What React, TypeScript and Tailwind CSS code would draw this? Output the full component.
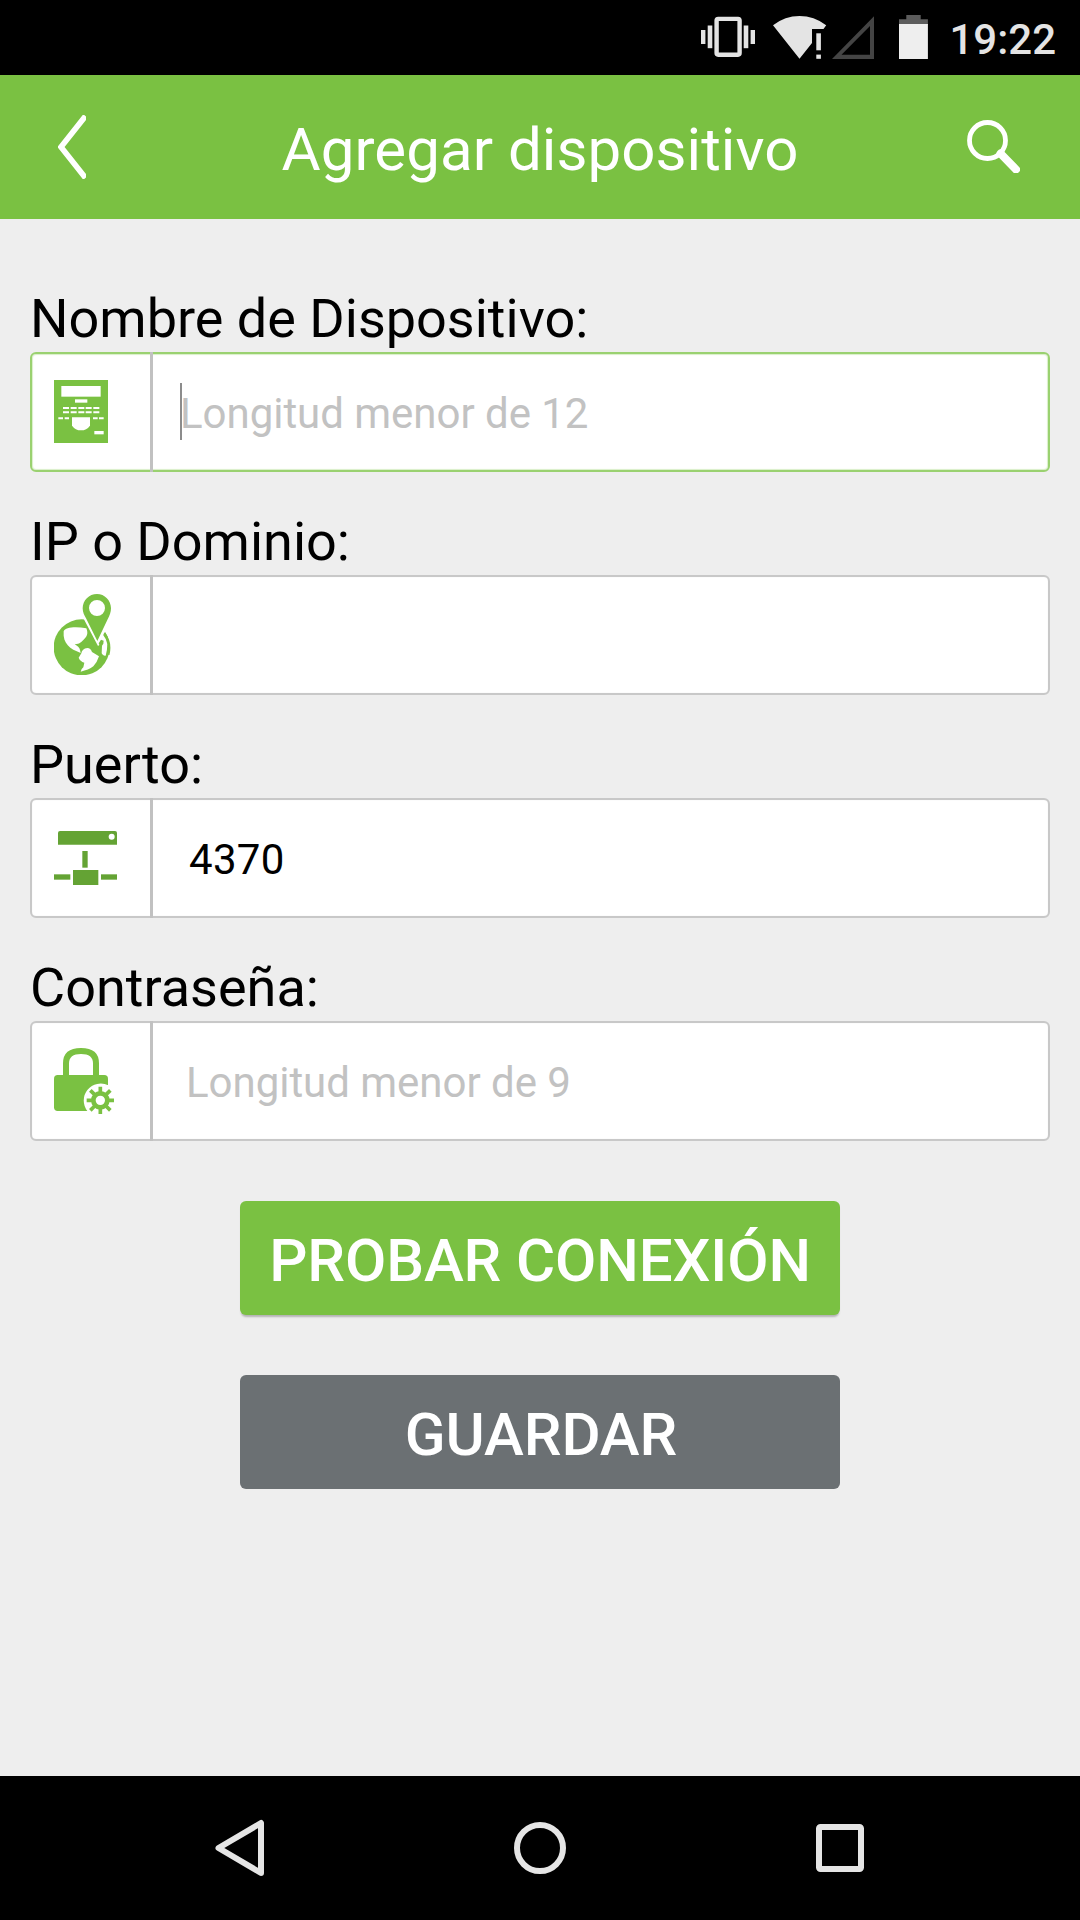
import React from 'react';
import clsx from 'clsx';

const StatusBar: React.FC = () => (
  <div className="flex h-[75px] items-start justify-end bg-black pr-[24px]">
    {/* vibrate */}
    <svg className="mr-[18px]" width="54" height="75" viewBox="701 0 54 75" fill="#e4e4e4">
      <rect x="701" y="30" width="4.4" height="14" />
      <rect x="707.7" y="25.5" width="4.6" height="22.7" />
      <rect x="743.7" y="25.5" width="4.6" height="22.7" />
      <rect x="750.6" y="30" width="4.4" height="14" />
      <rect x="716.6" y="18.9" width="23" height="35.8" rx="1.6" fill="none" stroke="#e4e4e4" strokeWidth="4.4" />
    </svg>
    {/* wifi */}
    <svg className="mr-[5px]" width="54" height="75" viewBox="773 0 54 75" fill="#e4e4e4">
      <path d="M773 25.2Q785 16 799.5 16T826.2 25.2L823.5 29H812V43L799.5 58.7Z" />
      <rect x="816.3" y="33.3" width="4.6" height="17" />
      <rect x="816.3" y="54.6" width="4.6" height="4.2" />
    </svg>
    {/* signal */}
    <svg className="mr-[25px]" width="42" height="75" viewBox="832 0 42 75">
      <path fill="#444" fillRule="evenodd" d="M832 59L874 16.3V59ZM841.5 54.8H870V26Z" />
    </svg>
    {/* battery */}
    <svg className="mr-[21px]" width="29" height="75" viewBox="899 0 29 75">
      <path fill="#5c5c5c" d="M906.3 15H920.7V19.3H927.9V25H899V19.3H906.3Z" />
      <rect x="899" y="24" width="28.9" height="35" fill="#eee" />
    </svg>
    <span className="mt-[15px] text-[42px] font-medium leading-[49px] text-[#e4e4e4]">19:22</span>
  </div>
);

const Header: React.FC = () => (
  <header className="flex h-[144px] items-center justify-between bg-[#7ac142] pl-[58px] pr-[60px] text-white">
    <button className="-mt-px">
      <svg width="28" height="64" viewBox="0 0 28 64" fill="none" stroke="currentColor" strokeWidth="5.6">
        <path d="M27.5 1L3 32L27.5 63" />
      </svg>
    </button>
    <h1 className="ml-[27px] mt-[6px] text-[60px] leading-[70px] tracking-[0.05px]">Agregar dispositivo</h1>
    <button className="-mt-px">
      <svg width="53" height="53" viewBox="0 0 53 53" fill="none" stroke="currentColor">
        <circle cx="20.5" cy="20.5" r="18" strokeWidth="4.8" />
        <path d="M33.5 33.5L49 49.5" strokeWidth="8" strokeLinecap="round" />
      </svg>
    </button>
  </header>
);

const DeviceIcon = () => (
  <svg className="-mt-[2px]" width="54" height="63" viewBox="102 300 162 189" fill="#fff">
    <path fill="#7ac142" d="M102 300H264V489H102Z" />
    <rect x="124" y="318" width="118" height="32" />
    <rect x="165" y="358" width="37" height="10" />
    <path
      stroke="#fff"
      strokeWidth="6"
      d="M129 384H147M152 384H170M175 384H193M197 384H215M220 384H238M129 397H147M152 397H170M175 397H193M197 397H215M220 397H238M115 415H129M134 415H147M219 415H233M237 415H251"
    />
    <path d="M156 412H210V437Q200 451 183 451T156 437Z" />
    <rect x="223" y="453" width="28" height="10" />
  </svg>
);

const GlobeIcon = () => (
  <svg className="-mt-[2px]" width="57" height="81" viewBox="102 102 171 243">
    <circle cx="185" cy="262" r="84" fill="#7ac142" />
    <g fill="#fff">
      <path d="M131 214C136 202 165 199 199 205C205 220 202 229 190 240C182 250 172 253 164 253C172 258 179 263 180 270L182 279C150 267 128 252 131 214Z" />
      <path d="M176 293L184 280Q186 266 202 264Q212 264 216 276L237 289Q232 306 220 319Q206 330 182 335Q184 326 190 322L193 308Q180 304 176 293Z" />
      <path d="M191 176L234 258L241 253L246 258L245 280Q249 289 257 287Q262 270 262 252Q260 238 250 226L254 217L275 214V160Z" />
    </g>
    <path d="M253 220Q274 248 265 284" fill="none" stroke="#7ac142" strokeWidth="7" />
    <path d="M236 250L243 239L251 242L250 251L244 260L238 254Z" fill="#7ac142" />
    <path
      fill="#7ac142"
      fillRule="evenodd"
      d="M231 102C207 102 188 121 188 145C188 157 193 166 198 175L232 243L263 178C269 167 273 156 273 145C273 121 254 102 231 102ZM231 120A24 24 0 1 1 231 168A24 24 0 1 1 231 120Z"
    />
  </svg>
);

const PortIcon = () => (
  <svg width="63" height="54" viewBox="102 153 189 162" fill="#64a334">
    <path d="M120 153H285Q291 153 291 159V194H114V159Q114 153 120 153Z" />
    <circle cx="275" cy="170" r="9" fill="#fff" />
    <rect x="187" y="213" width="16" height="50" />
    <rect x="159" y="270" width="76" height="45" />
    <rect x="102" y="283" width="49" height="16" />
    <rect x="243" y="283" width="48" height="16" />
  </svg>
);

const LockIcon = () => (
  <svg width="60" height="66" viewBox="102 144 180 198" fill="#7ac142">
    <path d="M138 230V190Q138 153 183 153T228 190V230" fill="none" stroke="#7ac142" strokeWidth="18" />
    <rect x="102" y="225" width="162" height="108" rx="11" />
    <path fill="#fff" d="M265 256A51 51 0 0 0 202 333L240 343L285 330V256Z" />
    <circle cx="241" cy="301" r="21" fill="none" stroke="#7ac142" strokeWidth="14" />
    <path
      stroke="#7ac142"
      strokeWidth="11"
      d="M241 277V260M241 325V342M217 301H200M265 301H282M224 284L211 271M258 284L271 271M224 318L211 331M258 318L271 331"
    />
  </svg>
);

interface FieldProps {
  label: string;
  icon: React.ReactNode;
  value?: string;
  placeholder?: string;
  active?: boolean;
  inputClass?: string;
}

const Field: React.FC<FieldProps> = ({ label, icon, value, placeholder, active, inputClass }) => (
  <label className="block">
    <span className="block h-[65px] text-[54px] leading-[63px] text-black">{label}</span>
    <div
      className={clsx(
        'flex h-[120px] rounded-[6px] border-2 bg-white',
        active ? 'border-[#9ad170] shadow-[inset_0_0_1px_1px_#d9efc8]' : 'border-[#c8c8c8] shadow-[inset_0_0_1px_#dddddd]'
      )}
    >
      <div className="flex w-[118px] items-center pl-[22px]">{icon}</div>
      <div className="-my-[2px] w-[3px] bg-[#c1c1c1]" />
      <div className="relative flex-1">
        {active && <div className="absolute left-[27px] top-[29px] h-[57px] w-[2px] bg-[#8c8c8c]" />}
        <input
          className={clsx(
            'h-full w-full bg-transparent pt-[3px] text-[42px] text-black outline-none placeholder:text-[#c2c2c2]',
            inputClass
          )}
          defaultValue={value}
          placeholder={placeholder}
        />
      </div>
    </div>
  </label>
);

export default function App() {
  return (
    <div className="flex h-[1920px] w-[1080px] flex-col overflow-hidden bg-[#eeeeee] font-['Roboto',sans-serif]">
      <StatusBar />
      <Header />

      <main className="flex flex-1 flex-col px-[30px] pt-[68px]">
        <div className="flex flex-col gap-[38px]">
          <Field
            label="Nombre de Dispositivo:"
            icon={<DeviceIcon />}
            placeholder="Longitud menor de 12"
            active
            inputClass="pl-[27px] tracking-[-0.03px]"
          />
          <Field label="IP o Dominio:" icon={<GlobeIcon />} inputClass="pl-[33px]" />
          <Field label="Puerto:" icon={<PortIcon />} value="4370" inputClass="pl-[36px] tracking-[0.3px]" />
          <Field
            label="Contraseña:"
            icon={<LockIcon />}
            placeholder="Longitud menor de 9"
            inputClass="pl-[33px] tracking-[-0.03px]"
          />
        </div>

        <div className="mt-[60px] flex flex-col items-center gap-[60px] text-[60px] font-medium tracking-[-0.12px] text-white">
          <button className="h-[114px] w-[600px] rounded-[6px] bg-[#7ac142] pt-[6px] leading-none shadow-[0_3px_2px_-1px_rgba(0,0,0,0.25)]">
            PROBAR CONEXIÓN
          </button>
          <button className="h-[114px] w-[600px] rounded-[6px] bg-[#6b7073] pl-[2px] pt-[6px] leading-none">
            GUARDAR
          </button>
        </div>
      </main>

      <nav className="flex h-[144px] items-center justify-between bg-black pl-[215px] pr-[216px]">
        <svg width="49" height="58" viewBox="0 0 49 58" fill="none" stroke="#e5e5e5" strokeWidth="6" strokeLinejoin="round">
          <path d="M46 4V54L3.5 29Z" />
        </svg>
        <svg width="52" height="52" viewBox="0 0 52 52" fill="none" stroke="#e5e5e5" strokeWidth="6">
          <circle cx="26" cy="26" r="23" />
        </svg>
        <svg width="48" height="48" viewBox="0 0 48 48" fill="none" stroke="#e5e5e5" strokeWidth="6">
          <rect x="3" y="3" width="42" height="42" rx="1.5" />
        </svg>
      </nav>
    </div>
  );
}
